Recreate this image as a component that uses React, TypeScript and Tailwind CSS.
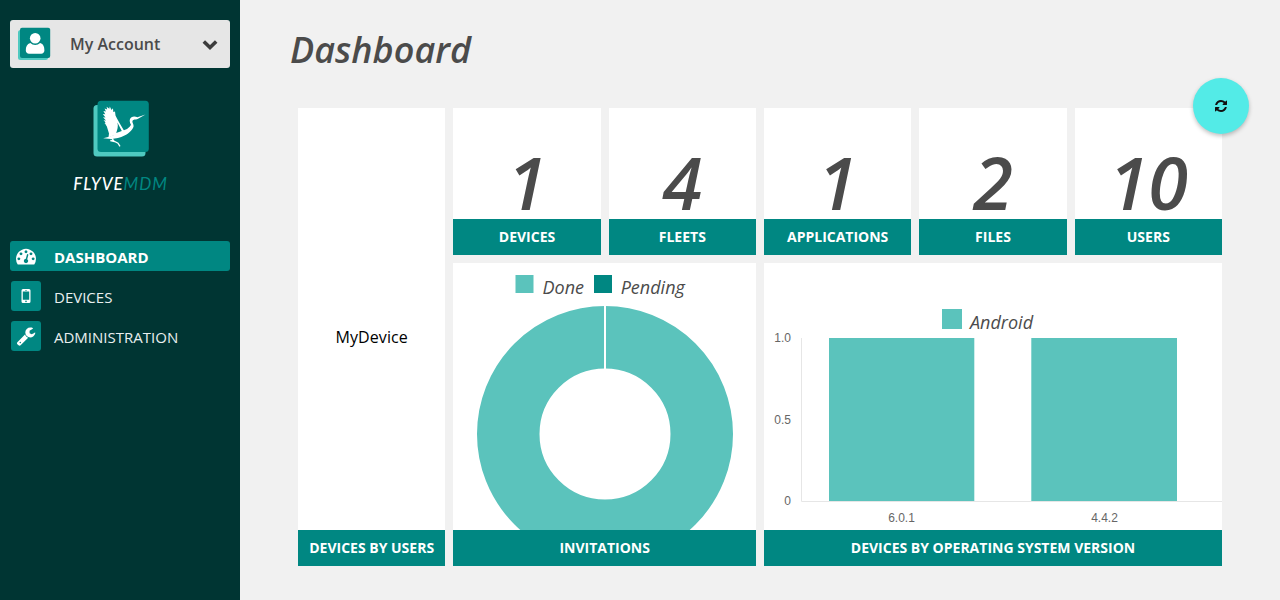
import type { ReactNode } from "react";

const SANS = "font-['Open_Sans','Noto_Sans',sans-serif]";

function Glyph({ d, box, className }: { d: string; box: string; className: string }) {
  return (
    <svg viewBox={box} className={className} fill="currentColor" aria-hidden="true">
      <path d={d} />
    </svg>
  );
}

const TACHOMETER =
  "M384 1152q0-53-37.5-90.5t-90.5-37.5-90.5 37.5-37.5 90.5 37.5 90.5 90.5 37.5 90.5-37.5 37.5-90.5zm192-448q0-53-37.5-90.5t-90.5-37.5-90.5 37.5-37.5 90.5 37.5 90.5 90.5 37.5 90.5-37.5 37.5-90.5zm428 481l101-382q6-26-7.5-48.5t-38.5-29.5-48 6.5-30 39.5l-101 382q-60 5-107 43.5t-63 98.5q-20 77 20 146t117 89 146-20 89-117q16-60-6-117t-72-91zm660-33q0-53-37.5-90.5t-90.5-37.5-90.5 37.5-37.5 90.5 37.5 90.5 90.5 37.5 90.5-37.5 37.5-90.5zm-640-640q0-53-37.5-90.5t-90.5-37.5-90.5 37.5-37.5 90.5 37.5 90.5 90.5 37.5 90.5-37.5 37.5-90.5zm448 192q0-53-37.5-90.5t-90.5-37.5-90.5 37.5-37.5 90.5 37.5 90.5 90.5 37.5 90.5-37.5 37.5-90.5zm320 448q0 261-141 483-19 29-54 29h-1402q-35 0-54-29-141-221-141-483 0-182 71-348t191-286 286-191 348-71 348 71 286 191 191 286 71 348z";
const WRENCH =
  "M448 1472q0-26-19-45t-45-19-45 19-19 45 19 45 45 19 45-19 19-45zm644-420l-682 682q-37 37-90 37-52 0-91-37l-106-108q-38-36-38-90 0-53 38-91l681-681q39 98 114.5 173.5t173.5 114.5zm634-435q0 39-23 106-47 134-164.5 217.5t-258.5 83.5q-185 0-316.5-131.5t-131.5-316.5 131.5-316.5 316.5-131.5q58 0 121.5 16.5t107.5 46.5q16 11 16 28t-16 28l-293 169v224l193 107q5-3 79-48.5t135.5-81 70.5-35.5q15 0 23.5 10t8.5 25z";
const REFRESH =
  "M1511 928q0 5-1 7-64 268-268 434.5t-478 166.5q-146 0-282.5-55t-243.5-157l-129 129q-19 19-45 19t-45-19-19-45v-448q0-26 19-45t45-19h448q26 0 45 19t19 45-19 45l-137 137q71 66 161 102t187 36q134 0 250-65t186-179q11-17 53-117 8-23 30-23h192q13 0 22.5 9.5t9.5 22.5zm25-800v448q0 26-19 45t-45 19h-448q-26 0-45-19t-19-45 19-45l138-138q-148-137-349-137-134 0-250 65t-186 179q-11 17-53 117-8 23-30 23h-199q-13 0-22.5-9.5t-9.5-22.5v-7q65-268 270-434.5t480-166.5q146 0 284 55.5t245 156.5l130-129q19-19 45-19t45 19 19 45z";

function AccountIcon() {
  return (
    <svg viewBox="0 0 34 34" className="h-[34px] w-[34px]" aria-hidden="true">
      <rect x="1" y="3" width="30" height="30" rx="2.5" fill="#4fc9c0" />
      <rect x="3" y="0.800" width="30.200" height="30.200" rx="2" fill="#008782" />
      <path
        d="M8.800 23.500c0-4 1.200-6.600 4.500-7.600a7 7 0 0 0 9.800 0c3.300 1 4.300 3.600 4.300 7.600 0 1.700-1.400 3.200-3.200 3.200H12c-1.800 0-3.200-1.500-3.200-3.200z"
        fill="#fff"
      />
      <circle cx="18.200" cy="11.200" r="5.300" fill="#fff" />
    </svg>
  );
}

function Logo() {
  return (
    <svg viewBox="0 0 56 57" className="ml-[2px] h-[57px] w-14" aria-hidden="true">
      <rect x="0.500" y="5" width="52" height="51.500" rx="3.500" fill="#4fc9c0" />
      <rect x="4.500" y="0.800" width="51.300" height="51.200" rx="3.500" fill="#008782" />
      <g fill="#fff">
        <path d="M31.400 31.200L24.500 36C20 34 15.500 28 11.500 23L13.600 23.300 10.500 20.200 13 20.400 10 17.200 12.500 17.400 9.800 14 12.300 14.300 10.400 11 12.900 11.500 11.600 8.400 14.200 9.500 13.600 6.800 16.300 8.800 16.800 6.600 18.500 10 20 8.200 20.300 12 22 11.500 22.500 15.500 24 18.500 26.500 23z" />
        <path d="M11.800 21L14 27 16 33.500 15.500 37.500 23 34.500 22 23z" />
        <path d="M10.200 38.300C17 37.300 23 34 28.500 31.300 34 29.500 36.500 27.600 38 24.800 36.500 22 36 19 38.500 17.300 40.500 16 42.600 16.500 44.400 17.300L52.500 14.600 44.600 18.900C42.500 19.700 40.300 19.100 39.500 20.700 38.800 22.200 40.800 24 40.600 26.200 40 29.500 36 33.200 31.500 35.600 27 38 21 39.200 18 38.900z" />
      </g>
      <path d="M24.400 22.500C25.500 26 24.300 30 23.200 33L28.800 31.100z" fill="#008782" />
      <path d="M18.500 38L21.300 41.300 25 43.200 27 46.400M17.300 40.500L21.500 41.500" stroke="#fff" strokeWidth="1.300" fill="none" />
    </svg>
  );
}

function MobileIcon() {
  return (
    <svg viewBox="0 0 10 16" className="h-4 w-[10px]" aria-hidden="true">
      <path
        fillRule="evenodd"
        fill="#fff"
        d="M2 1h6a1.500 1.500 0 0 1 1.500 1.500v11A1.500 1.500 0 0 1 8 15H2a1.500 1.500 0 0 1-1.500-1.500v-11A1.500 1.500 0 0 1 2 1zM1.800 3.500v8.300h6.400V3.500zM4 2v.5h2V2zM5 12.600a.8.8 0 1 0 0 1.600.8.8 0 0 0 0-1.600z"
      />
    </svg>
  );
}

function NavItem({ icon, label, active }: { icon: ReactNode; label: string; active?: boolean }) {
  return (
    <li
      className={
        active
          ? "flex h-[30px] items-center rounded-[3px] bg-[#008782] pl-px font-bold text-white"
          : "flex h-[30px] items-center pl-px text-[#e9efef]"
      }
    >
      <span className="flex h-[30px] w-[30px] items-center justify-center rounded-[3px] bg-[#008782] text-white">
        {icon}
      </span>
      <span className="ml-[13px] pt-[2px] text-[15px] leading-5">{label}</span>
    </li>
  );
}

function Card({ title, className, children }: { title: string; className?: string; children: ReactNode }) {
  return (
    <section className={`flex min-w-0 flex-col bg-white ${className ?? ""}`}>
      <div className="min-h-0 flex-1">{children}</div>
      <h2 className="flex h-9 shrink-0 items-center justify-center bg-[#008782] text-[14px] leading-5 font-bold whitespace-nowrap text-white">
        {title}
      </h2>
    </section>
  );
}

const COUNTS: [string, string][] = [
  ["1", "DEVICES"],
  ["4", "FLEETS"],
  ["1", "APPLICATIONS"],
  ["2", "FILES"],
  ["10", "USERS"],
];

function DonutChart() {
  return (
    <svg width="303" height="267" className="block">
      <rect x="62.500" y="12" width="18" height="18" fill="#5bc3bc" />
      <rect x="141" y="12" width="18" height="18" fill="#008782" />
      <g fontSize="18" fontStyle="italic" fill="#4b4b4b">
        <text x="89.500" y="31">Done</text>
        <text x="167.700" y="31">Pending</text>
      </g>
      <circle cx="152" cy="171" r="96.750" fill="none" stroke="#5bc3bc" strokeWidth="62.500" />
      <path d="M152 42V107" stroke="#fff" strokeWidth="2" />
    </svg>
  );
}

function BarChart() {
  return (
    <svg width="458" height="267" className="block">
      <rect x="178" y="46" width="20" height="20" fill="#5bc3bc" />
      <text x="206" y="66" fontSize="18" fontStyle="italic" fill="#4b4b4b">Android</text>
      <path d="M37.500 75V238.500H458" stroke="#e6e6e6" fill="none" />
      <rect x="65" y="75" width="145.300" height="163" fill="#5bc3bc" />
      <rect x="267.300" y="75" width="145.700" height="163" fill="#5bc3bc" />
      <g className="font-['Liberation_Sans',sans-serif]" fontSize="12" fill="#666">
        <text x="27" y="79" textAnchor="end">1.0</text>
        <text x="27" y="161" textAnchor="end">0.5</text>
        <text x="27" y="242" textAnchor="end">0</text>
        <text x="137.500" y="259" textAnchor="middle">6.0.1</text>
        <text x="340.500" y="259" textAnchor="middle">4.4.2</text>
      </g>
    </svg>
  );
}

export default function App() {
  return (
    <div className={`flex h-[600px] w-[1280px] overflow-hidden bg-[#f1f1f1] ${SANS}`}>
      <aside className="flex w-60 shrink-0 flex-col bg-[#003533] px-[10px] pt-5">
        <button className="flex h-12 items-center rounded-[3px] bg-[#e6e6e6] pr-3 pl-[7px] text-[#4b4b4b]">
          <AccountIcon />
          <span className="ml-[19px] text-[16px] font-semibold">My Account</span>
          <svg viewBox="0 0 16 12" className="mt-0.5 ml-auto h-3 w-4" fill="none" stroke="#3c3c3c" strokeWidth="3.600" aria-hidden="true">
            <path d="M1.800 2.500L8 8.500 14.200 2.500" />
          </svg>
        </button>
        <div className="mt-8 flex flex-col items-center">
          <Logo />
          <div className="mt-[15px] ml-px flex h-6 items-center font-['Lato',sans-serif] text-[17px] tracking-[0.95px] text-white italic">
            <span className="font-medium">FLYVE</span>
            <span className="text-[#008782]">MDM</span>
          </div>
        </div>
        <nav className="mt-[45px]">
          <ul className="flex flex-col gap-[10px]">
            <NavItem active label="DASHBOARD" icon={<Glyph d={TACHOMETER} box="0 0 1792 1792" className="h-5 w-5" />} />
            <NavItem label="DEVICES" icon={<MobileIcon />} />
            <NavItem label="ADMINISTRATION" icon={<Glyph d={WRENCH} box="0 0 1792 1792" className="h-5 w-5" />} />
          </ul>
        </nav>
      </aside>
      <main className="relative flex-1 pr-[58px] pl-[50px]">
        <h1 className="pt-[25px] text-[36px] leading-[50px] font-semibold text-[#4b4b4b] italic">Dashboard</h1>
        <div className="mt-[33px] ml-2 grid grid-cols-6 grid-rows-[147px_303px] gap-2">
          <Card title="DEVICES BY USERS" className="row-span-2">
            <div className="flex h-full items-center justify-center pt-[36px] text-[16px] tracking-[0.1px] text-black">MyDevice</div>
          </Card>
          {COUNTS.map(([value, label]) => (
            <Card key={label} title={label}>
              <div className="pt-[38px] text-center text-[72px] leading-[72px] font-semibold text-[#4b4b4b] italic">{value}</div>
            </Card>
          ))}
          <Card title="INVITATIONS" className="col-span-2">
            <DonutChart />
          </Card>
          <Card title="DEVICES BY OPERATING SYSTEM VERSION" className="col-span-3">
            <BarChart />
          </Card>
        </div>
        <button
          aria-label="Refresh"
          className="absolute top-[78px] right-[31px] flex h-14 w-14 items-center justify-center rounded-full bg-[#53ebe7] text-[#111] shadow-[0_2px_4px_rgba(0,0,0,0.25)]"
        >
          <Glyph d={REFRESH} box="0 0 1536 1536" className="h-3 w-3" />
        </button>
      </main>
    </div>
  );
}
